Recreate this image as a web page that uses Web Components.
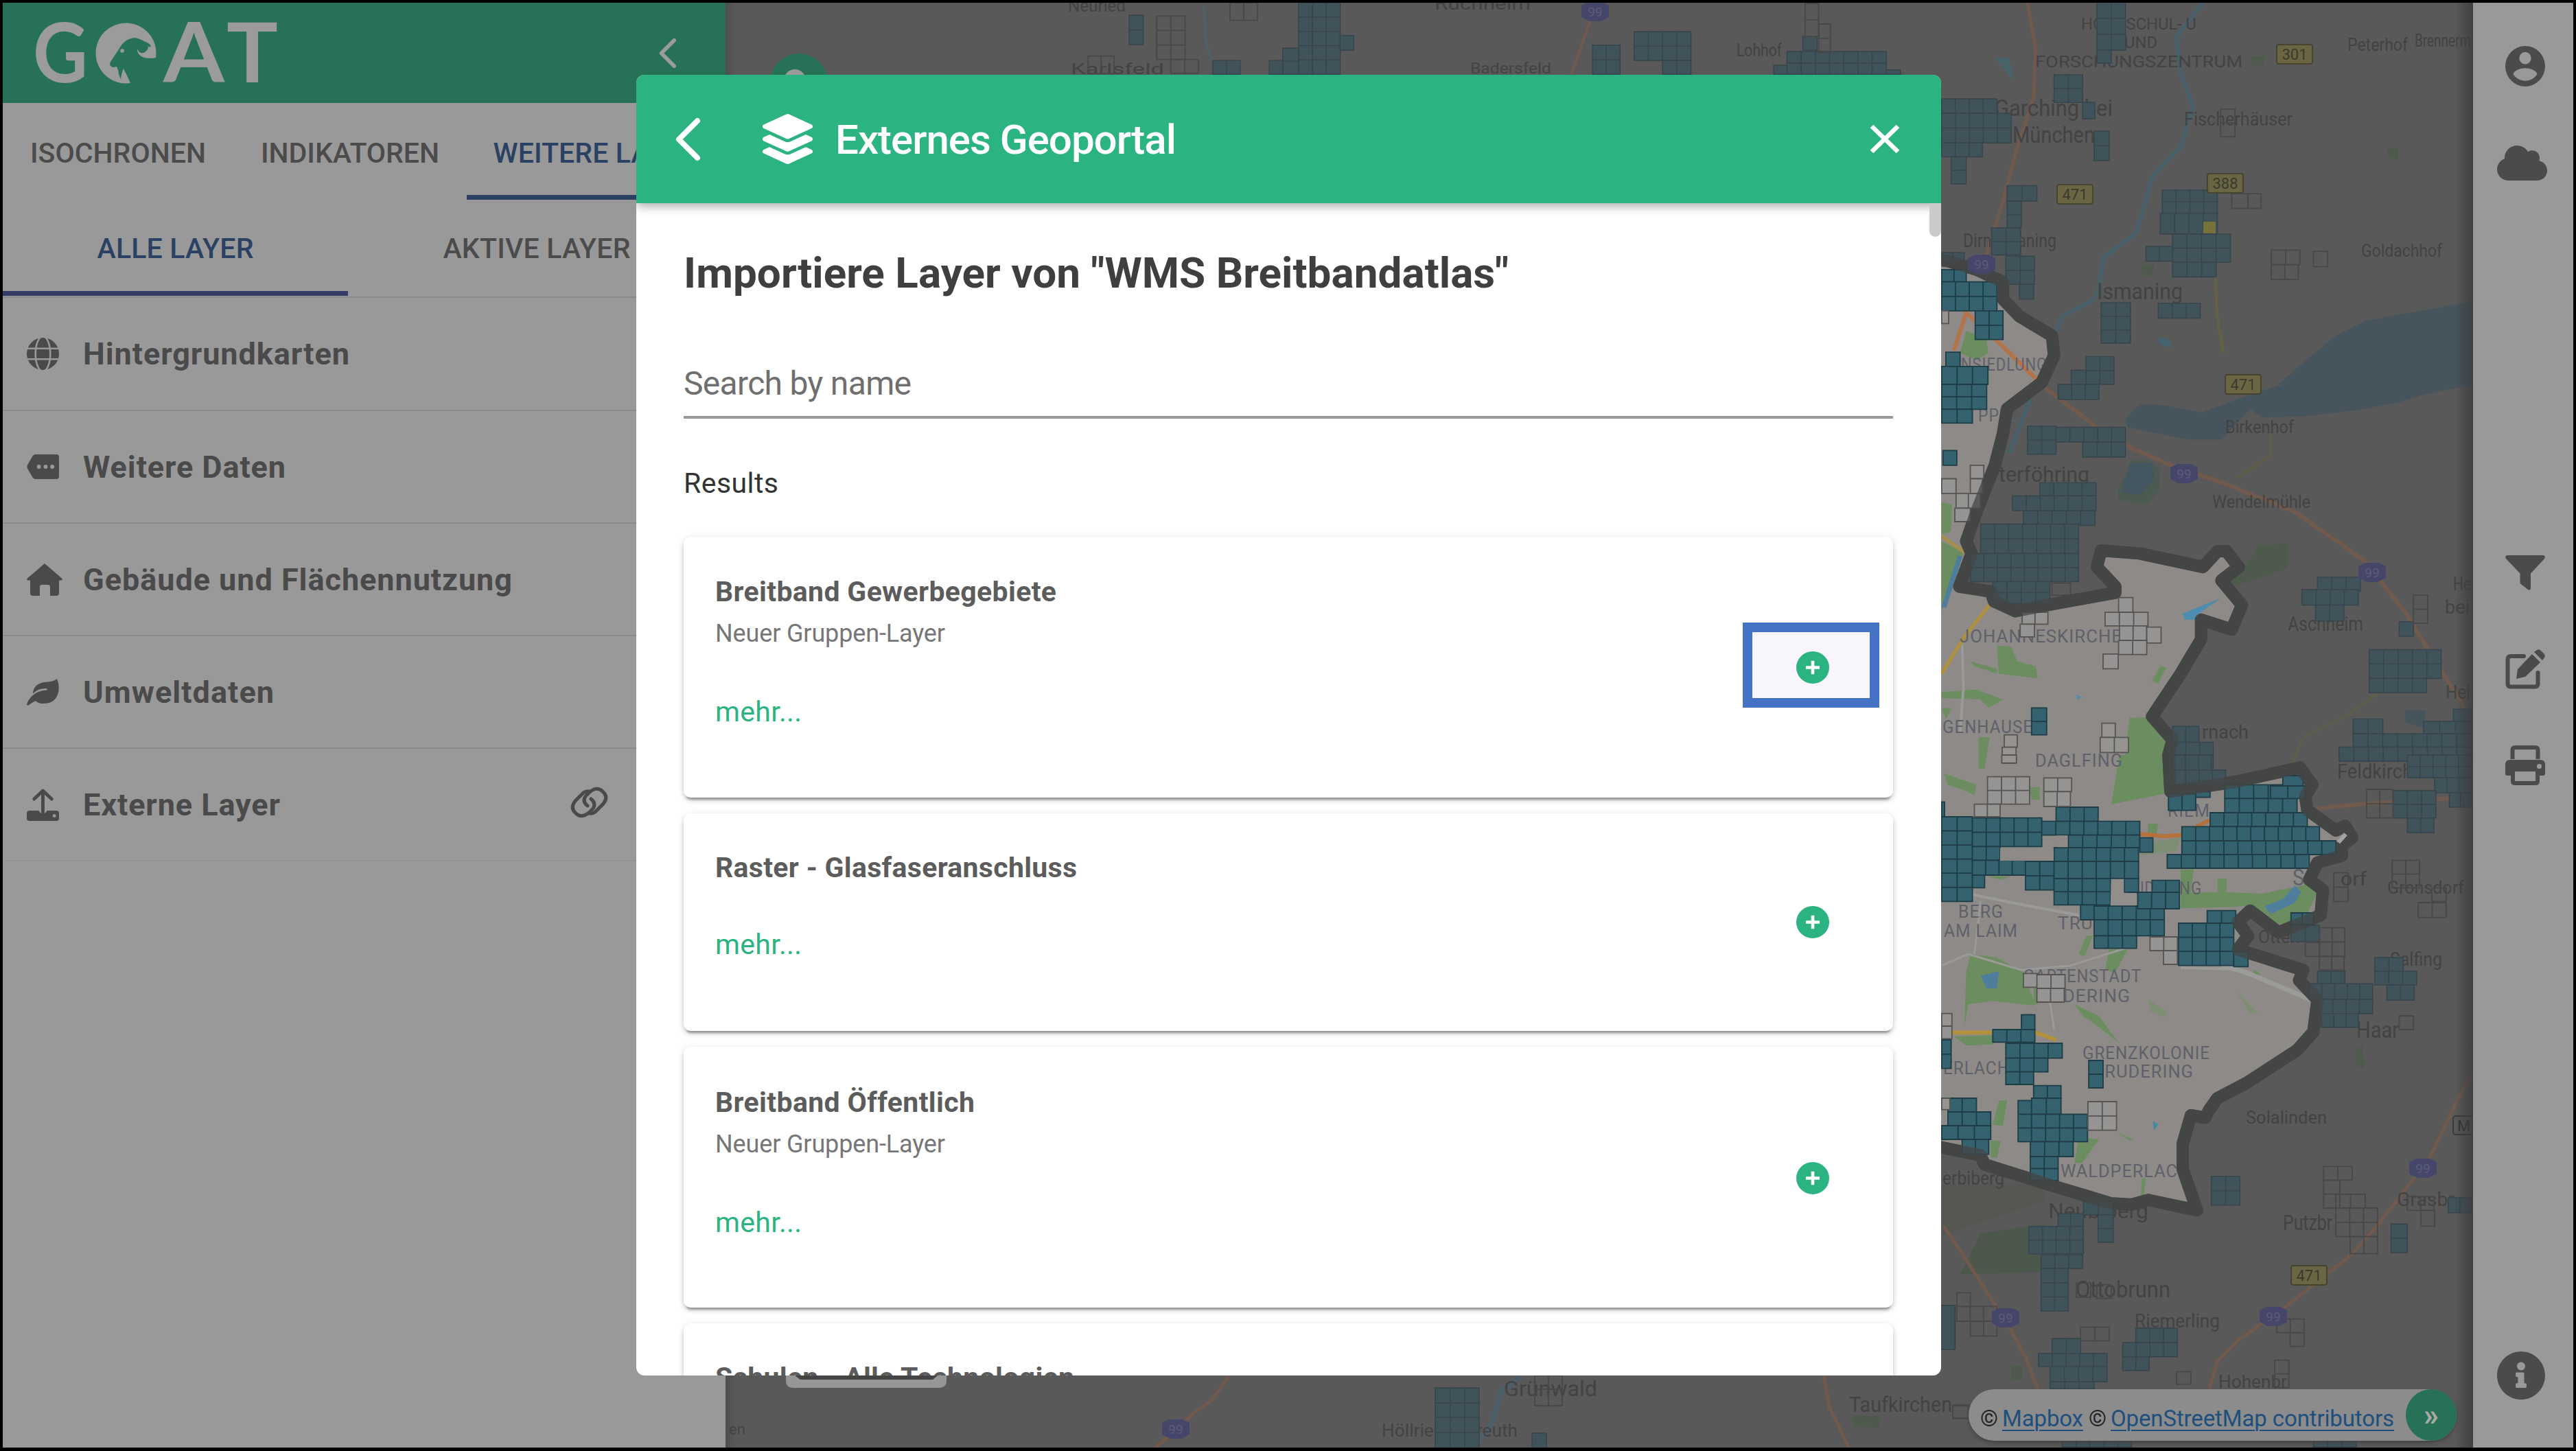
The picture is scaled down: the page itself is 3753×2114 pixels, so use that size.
<!DOCTYPE html>
<html lang="de">
<head>
<meta charset="utf-8">
<title>GOAT – Externes Geoportal</title>
<style>
html,body{margin:0;padding:0;background:#000}
body{width:3753px;height:2114px;overflow:hidden;font-family:Roboto,"Liberation Sans",sans-serif}
</style>
</head>
<body>
<goat-app></goat-app>
<script>
const define = (name, html, after) => {
  const tpl = document.createElement('template');
  tpl.innerHTML = html;
  customElements.define(name, class extends HTMLElement {
    constructor() {
      super();
      this.attachShadow({ mode: 'open' }).appendChild(tpl.content.cloneNode(true));
    }
    connectedCallback() { if (after) after.call(this, this.shadowRoot); }
  });
};

/* One line of text whose tracking is adjusted to a given width */
define('fit-text', `<style>:host{display:inline-block;white-space:pre}</style><span><slot></slot></span>`, function () {
  const w = +this.getAttribute('w'), n = this.textContent.length;
  const nat = this.getBoundingClientRect().width;
  if (w && nat) { this.style.letterSpacing = ((w - nat) / (n - 1)).toFixed(3) + 'px'; this.style.width = w + 'px'; }
});

const ICONS = {
  account: ['2 2 20 20', '<path d="M12,19.2C9.5,19.2 7.29,17.92 6,16C6.03,14 10,12.9 12,12.9C14,12.9 17.97,14 18,16C16.71,17.92 14.5,19.2 12,19.2M12,5A3,3 0 0,1 15,8A3,3 0 0,1 12,11A3,3 0 0,1 9,8A3,3 0 0,1 12,5M12,2A10,10 0 0,0 2,12A10,10 0 0,0 12,22A10,10 0 0,0 22,12C22,6.47 17.5,2 12,2Z"/>'],
  cloud: ['0 32 640 448', '<path d="M537.6 226.6c4.1-10.7 6.4-22.4 6.4-34.6 0-53-43-96-96-96-19.7 0-38.1 6-53.3 16.2C367 64.2 315.3 32 256 32c-88.4 0-160 71.6-160 160 0 2.7.1 5.4.2 8.1C40.2 219.8 0 273.2 0 336c0 79.5 64.5 144 144 144h368c70.7 0 128-57.3 128-128 0-61.9-44-113.6-102.4-125.4z"/>'],
  filter: ['0 0 58 52', '<path d="M2 0H56Q59 2 57 5L37 27V50Q36 52.500 33 51L23 43Q21.500 42 21.500 40V27L1 5Q-1 2 2 0Z"/>'],
  edit: ['0 0 58 58', '<path d="M27 10H8Q3.500 10 3.500 14.500V50Q3.500 54.500 8 54.500H43Q47.500 54.500 47.500 50V34" fill="none" stroke="currentColor" stroke-width="6" stroke-linecap="round"/><path d="M39 7L51 19L29 40L16 43L18 29ZM42 4L46 1Q49-1 52 2L56 6Q59 9 57 12L54 16Z"/>'],
  print: ['0 0 58 58', '<path d="M10.500 20V7Q10.500 3 14.500 3H43.500Q47.500 3 47.500 7V20" fill="none" stroke="currentColor" stroke-width="6"/><path fill-rule="evenodd" d="M7 21H51Q58 21 58 28V41Q58 44 55 44H50V52Q50 58 44 58H14Q8 58 8 52V44H3Q0 44 0 41V28Q0 21 7 21ZM14 38V52H44V38ZM49.500 27A3.500 3.500 0 1 0 49.500 34A3.500 3.500 0 1 0 49.500 27Z"/>'],
  info: ['8 8 496 496', '<path d="M256 8C119.043 8 8 119.083 8 256c0 136.997 111.043 248 248 248s248-111.003 248-248C504 119.083 392.957 8 256 8zm0 110c23.196 0 42 18.804 42 42s-18.804 42-42 42-42-18.804-42-42 18.804-42 42-42zm56 254c0 6.627-5.373 12-12 12h-88c-6.627 0-12-5.373-12-12v-24c0-6.627 5.373-12 12-12h12v-64h-12c-6.627 0-12-5.373-12-12v-24c0-6.627 5.373-12 12-12h64c6.627 0 12 5.373 12 12v100h12c6.627 0 12 5.373 12 12v24z"/>'],
  layers: ['0 0 512 512', '<path d="M12.41 148.02l232.94 105.67c6.8 3.09 14.49 3.09 21.29 0l232.94-105.67c16.55-7.51 16.55-32.52 0-40.03L266.65 2.31a25.607 25.607 0 0 0-21.29 0L12.41 107.98c-16.55 7.51-16.55 32.53 0 40.04zm487.18 88.28l-58.09-26.33-161.64 73.27c-7.56 3.43-15.59 5.17-23.86 5.17s-16.29-1.74-23.86-5.17L70.51 209.97l-58.1 26.33c-16.55 7.5-16.55 32.5 0 40l232.94 105.59c6.8 3.08 14.49 3.08 21.29 0L499.59 276.3c16.55-7.5 16.55-32.5 0-40zm0 127.8l-57.87-26.23-161.86 73.37c-7.56 3.43-15.59 5.17-23.86 5.17s-16.29-1.74-23.86-5.17L70.29 337.87 12.41 364.1c-16.55 7.5-16.55 32.5 0 40l232.94 105.59c6.8 3.08 14.49 3.08 21.29 0L499.59 404.1c16.55-7.5 16.55-32.5 0-40z"/>'],
  back: ['0 0 36 62', '<path d="M32 4L5 31L32 58" fill="none" stroke="currentColor" stroke-width="8" stroke-linecap="round" stroke-linejoin="round"/>'],
  close: ['0 0 44 44', '<path d="M3 3L41 41M41 3L3 41" fill="none" stroke="currentColor" stroke-width="6.500"/>'],
  plus: ['0 0 48 48', '<circle cx="24" cy="24" r="24"/><path d="M24 14V34M14 24H34" stroke="#fff" stroke-width="4.600"/>'],
  globe: ['0 0 48 48', '<circle cx="24" cy="24" r="24"/><g fill="none" stroke="#999" stroke-width="2.600"><ellipse cx="24" cy="24" rx="11" ry="26"/><path d="M0 16H48M0 32H48"/></g>'],
  tag: ['0 0 48 36', '<path d="M13 0H44Q48 0 48 4V32Q48 36 44 36H13Q10.500 36 9 34L1 20.500Q0 18 1 15.500L9 2Q10.500 0 13 0Z"/><g fill="#999"><circle cx="18" cy="18" r="3"/><circle cx="28" cy="18" r="3"/><circle cx="38" cy="18" r="3"/></g>'],
  home: ['0 0 52 47', '<path d="M26 0L51 21.500Q53 24 50 24.500H47V43Q47 47 43 47H34V34Q34 31 31 31H22Q19 31 19 34V47H9Q5 47 5 43V24.500H2Q-1 24 1 21.500Z"/>'],
  leaf: ['0 0 48 40', '<path d="M45 0Q49 10 47 20Q43 37 25 37Q18 37 13 33Q6 36 3.500 39Q1 41 0 38Q4 26 16 20Q23 17 30 17Q31 15 29 14.500Q18 14 9 22Q10 8 25 5Q39 5 45 0Z"/>'],
  upload: ['0 0 48 47', '<path d="M24 4V34M11 15L24 3L37 15" fill="none" stroke="currentColor" stroke-width="5" stroke-linecap="round" stroke-linejoin="round"/><path fill-rule="evenodd" d="M4 32H18Q19 36 24 36T30 32H44Q48 32 48 36V43Q48 47 44 47H4Q0 47 0 43V36Q0 32 4 32ZM41 37A2.500 2.500 0 1 0 41 42A2.500 2.500 0 1 0 41 37Z"/>'],
  link: ['0 0 55 44', '<g fill="none" stroke="currentColor" stroke-width="5" stroke-linecap="round"><path d="M25 27Q17 21 22 13L28 7Q39-2 47 6Q56 14 48 24L36 36Q32 39 28 38"/><path d="M30 17Q38 23 33 31L27 37Q16 46 8 38Q-1 30 7 20L19 8Q23 5 27 6"/></g>']
};
define('ui-icon', `<style>:host{display:inline-block;flex:none}svg{display:block;width:100%;height:100%;fill:currentColor;overflow:visible}</style><svg preserveAspectRatio="none"></svg>`, function (r) {
  const [vb, body] = ICONS[this.getAttribute('name')];
  const s = r.querySelector('svg');
  s.setAttribute('viewBox', vb); s.innerHTML = body;
  this.style.width = this.getAttribute('w') + 'px';
  this.style.height = this.getAttribute('h') + 'px';
});

/* Wordmark: letters with a goat's head in the round letter */
define('goat-logo', `<style>:host{display:block;width:352px;height:90px}svg{display:block;overflow:visible}text{font-family:Lato,sans-serif;font-weight:700;font-size:121px;fill:#9b9b9b}</style>
<svg width="352" height="90" viewBox="50 32 352 90">
<text x="47" y="120" textLength="80" lengthAdjust="spacingAndGlyphs">G</text>
<path d="M189 121A44 44 0 1 1 226 84Q220 86 209 84Q198 80 199 71Q203 80 210 76Q217 71 214 65Q207 57 196 55Q180 56 172 72L160 90Q157 95 163 98Q166 98 169 97Q172 103 172 108Q173 112 175 115Q176 106 179 100Q184 110 189 121Z" fill="#9b9b9b"/>
<path d="M194 62Q210 58 218 68" fill="none" stroke="#277156" stroke-width="3"/>
<circle cx="177" cy="74" r="2.800" fill="#9b9b9b"/>
<text x="237" y="120" textLength="89" lengthAdjust="spacingAndGlyphs">A</text>
<text x="329" y="120" textLength="75" lengthAdjust="spacingAndGlyphs">T</text>
</svg>`);

define('side-tab', `<style>
:host{display:flex;align-items:center;justify-content:center;box-sizing:border-box;flex:none;color:#4b4b4b;font-size:41px;font-weight:500;line-height:50px}
:host([active]){color:#2b4164}
</style><slot></slot>`);

define('side-row', `<style>
:host{display:flex;align-items:center;height:164px;box-sizing:border-box;border-bottom:2px solid #8a8a8a;padding-left:35px;color:#4a4a4a;font-size:45px;font-weight:700}
:host([last]){border-bottom-color:#939393}
.i{width:82px;display:flex}
.e{margin-left:auto;padding-right:171px;padding-top:5px}
</style><div class="i"><slot name="icon"></slot></div><slot></slot><div class="e"><slot name="end"></slot></div>`);

define('goat-sidebar', `<style>
:host{display:block;width:1053px;height:2105px;background:#999;overflow:hidden}
header{display:flex;align-items:center;justify-content:space-between;height:146px;background:#277156;color:#9b9b9b;padding:0 72px 0 47px;box-sizing:border-box}
.tabs{display:flex}
.a{height:141px}.a side-tab{height:141px;padding-top:4px}
.b{height:143px;border-bottom:2px solid #8a8a8a;box-sizing:border-box}
.b side-tab{height:140px;padding-top:2px}
</style>
<header><goat-logo></goat-logo><ui-icon name="back" w="25" h="43"></ui-icon></header>
<div class="tabs a">
<side-tab style="width:336px"><fit-text w="256">ISOCHRONEN</fit-text></side-tab>
<side-tab style="width:340px"><fit-text w="260">INDIKATOREN</fit-text></side-tab>
<side-tab active style="width:377px;box-shadow:inset 0 -7px #2b4164"><fit-text w="300">WEITERE LAYER</fit-text></side-tab>
</div>
<div class="tabs b">
<side-tab active style="width:503px;box-shadow:inset 0 -7px #333c66"><fit-text w="228">ALLE LAYER</fit-text></side-tab>
<side-tab style="width:550px"><fit-text w="273">AKTIVE LAYER</fit-text></side-tab>
</div>
<side-row style="height:165px"><ui-icon slot="icon" name="globe" w="47" h="47"></ui-icon><fit-text w="388">Hintergrundkarten</fit-text></side-row>
<side-row><ui-icon slot="icon" name="tag" w="47" h="36"></ui-icon><fit-text w="295">Weitere Daten</fit-text></side-row>
<side-row><ui-icon slot="icon" name="home" w="52" h="47"></ui-icon><fit-text w="625">Gebäude und Flächennutzung</fit-text></side-row>
<side-row><ui-icon slot="icon" name="leaf" w="47" h="39"></ui-icon><fit-text w="278">Umweltdaten</fit-text></side-row>
<side-row last><ui-icon slot="icon" name="upload" w="47" h="47"></ui-icon><fit-text w="287">Externe Layer</fit-text><ui-icon slot="end" name="link" w="55" h="44"></ui-icon></side-row>`);

/* Map of the city's east: every tile lists its features in its own grid units */
const TILES = { a: [0, 2.8], b: [560, 2.8], c: [1100, 3], d: [1600, 3], t: [0, 3] };
const px = (t, u, v) => [+(t === 't' ? 1040 + u / .8711 : 2820 + u / 1.6806).toFixed(1), +(TILES[t][0] + v / TILES[t][1]).toFixed(1)];
const line = segs => segs.map(([t, s]) => s.trim().split(/\s+/).map(p => px(t, ...p.split(',').map(Number)).join(',')).join(' ')).join(' ');
/* Each block is its own path, so a later block hides the grid of the one below it */
const cells = (t, s) => s.trim().split(/\s+/).map(q => {
  const [u1, v1, u2, v2] = q.split(',').map(Number);
  const [x1, y1] = px(t, u1, v1), [x2, y2] = px(t, u2, v2);
  const nx = Math.max(1, Math.round((x2 - x1) / 20.5)), ny = Math.max(1, Math.round((y2 - y1) / 20.8));
  let d = `M${x1} ${y1}H${x2}V${y2}H${x1}Z`;
  for (let i = 1; i < nx; i++) { const x = (x1 + (x2 - x1) * i / nx).toFixed(1); d += `M${x} ${y1}V${y2}`; }
  for (let i = 1; i < ny; i++) { const y = (y1 + (y2 - y1) * i / ny).toFixed(1); d += `M${x1} ${y}H${x2}`; }
  return `<path d="${d}"/>`;
}).join('');
const label = (x, y, w, size, text, cls = 'o') => `<text class="${cls}" x="${x}" y="${y}" font-size="${size}" textLength="${w}" lengthAdjust="spacingAndGlyphs">${text}</text>`;
const badge = (x, y, text) => `<rect x="${x - 26}" y="${y - 14}" width="52" height="28" rx="3" fill="#6a6644" stroke="#46442f" stroke-width="2"/><text x="${x}" y="${y + 8}" font-size="22" text-anchor="middle" fill="#3a3a2e">${text}</text>`;
const shield = (x, y) => `<path d="M${x - 20} ${y - 9}L${x - 10} ${y - 14}H${x + 10}L${x + 20} ${y - 9}V${y + 8}L${x + 8} ${y + 14}H${x - 8}L${x - 20} ${y + 8}Z" fill="#45466a"/><text x="${x}" y="${y + 7}" font-size="19" text-anchor="middle" fill="#5b5c79">99</text>`;

const border = line([
  ['a', '-60,1045 30,1065 100,1100 165,1150 165,1220 205,1290 285,1370 290,1450 260,1560'],
  ['b', '175,100 165,200 145,330 100,520 75,640 88,690 58,825 135,845 143,885 195,925 290,895 440,850 440,825 395,745 405,678 500,690 655,745 690,680 712,680 742,745 700,800 750,900 725,1000 650,960 650,1040 600,1180 530,1355 580,1450'],
  ['c', '570,0 575,160 740,115 892,55 922,130 905,180 910,240 980,330 1003,310 1020,360 993,400 995,440 935,470 915,545 948,590 943,700 840,775 770,680 740,730 765,790 740,850 900,940 890,985 935,1070 925,1210 885,1290 760,1435 690,1500'],
  ['d', '670,50 660,85 625,75 605,200 605,310 640,490 520,445 480,465 430,460 300,390 120,290 110,250 15,215 -60,195']]);
const P = (t, s, fill) => `<polygon points="${line([[t, s]])}" fill="${fill}"/>`;
const L = (segs, c, w) => `<polyline points="${line(segs)}" fill="none" stroke="${c}" stroke-width="${w}" stroke-linejoin="round"/>`;
const G = '#6c8d60', GO = '#4e5a4c', W = '#4f7e9d', OR = '#705a4d';

const mapSvg = `
<rect x="1057" y="4" width="2546" height="2106" fill="#595959"/>
${P('a', '840,1568 900,1480 980,1370 1050,1310 1130,1285 1315,1230 1315,1568', '#46545d')}
${P('b', '500,80 560,85 650,115 740,60 850,0 1315,0 1200,40 1130,75 1030,105 900,130 800,135 770,100 700,225 620,225 470,175 465,140', '#46545d')}
${P('b', '480,310 520,310 550,350 545,440 515,490 450,475 445,440', '#4b5b51')}${P('b', '475,320 530,320 535,390 500,450 455,440', '#44565f')}
${P('b', '790,660 860,645 860,750 735,825 720,800 760,740', GO)}
${P('d', '15,380 270,380 265,450 15,600', '#565750')}${P('d', '110,590 270,550 265,760 60,770', '#4d584c')}
${P('a', '145,235 180,235 192,330', '#466469')}
${P('a', '770,230 810,230 800,270 775,265', GO)}${P('a', '1105,605 1135,605 1130,655 1108,640', GO)}${P('a', '505,1080 535,1080 530,1130 505,1120', GO)}${P('a', '550,1370 580,1400 570,1420 545,1400', '#46646d')}
${P('b', '1150,1330 1200,1330 1195,1400 1150,1380', '#46555c')}${P('c', '1030,1280 1045,1270 1050,1370 1030,1360', GO)}${P('d', '185,1170 212,1170 212,1230 185,1230', GO)}
${L([['a', '655,10 590,150 600,300 630,430 600,600 530,720 510,850 490,950 410,1050 400,1180 385,1225 310,1290 290,1370'], ['b', '200,200 180,280']], '#48606a', 6)}
${L([['a', '225,10 245,200 240,400 200,600 160,850 120,1060']], OR, 5)}
${L([['b', '265,10 390,170 480,260 570,325 700,400 880,520 1050,720 1150,930 1250,1200 1300,1330']], OR, 6)}
${L([['c', '1318,1390 1280,1500'], ['d', '1210,260 1080,560 1020,680 880,880 740,1060 690,1150 670,1270']], OR, 5)}
${L([['d', '20,560 80,720 130,860 180,1000 220,1130 250,1272']], OR, 5)}
${L([['a', '685,1130 690,1300 705,1440']], '#646046', 4)}${L([['b', '820,200 820,290 740,380']], '#5f5c48', 4)}
${L([['b', '1090,1250 1000,1360 900,1440 870,1560']], '#5f5e4a', 4)}
${L([['c', '925,235 1040,215 1150,200 1260,190']], OR, 6)}
${L([['t', '1112,90 1100,210 1088,325']], OR, 4)}${L([['t', '622,20 625,200 640,320']], '#526068', 4)}
<polyline points="1790,2006 1765,2040 1738,2060 1705,2090 1680,2112" fill="none" stroke="${OR}" stroke-width="5"/>
<polyline points="2657,2004 2665,2050 2680,2080 2695,2112" fill="none" stroke="${OR}" stroke-width="5"/>
<polyline points="2215,2004 2185,2030 2175,2070 2155,2100" fill="none" stroke="#4c5e67" stroke-width="8"/>
<polygon points="2700,2062 2740,2064 2736,2080 2700,2078" fill="${GO}"/>
<polygon points="${border}" fill="#8e8a87"/>
${P('a', '75,1350 125,1380 128,1440 100,1470 60,1440', G)}
${P('b', '15,480 40,490 38,600 15,610', G)}${P('b', '15,640 68,685 40,840 15,920', G)}${L([['b', '60,700 20,910']], W, 7)}
${P('b', '150,1065 185,1070 200,1130 245,1150 250,1200 155,1180', G)}${P('b', '85,1130 150,1160 150,1180 95,1150', G)}
${P('b', '15,1255 100,1245 165,1285 130,1320 110,1285 15,1280', G)}${P('b', '550,1150 565,1155 545,1220 530,1210', G)}
${P('b', '475,1360 525,1358 575,1450 575,1568 460,1568', G)}${P('c', '450,0 560,0 560,170 430,215', G)}
${P('b', '105,1440 132,1440 120,1568 105,1568', G)}${P('b', '15,1320 40,1320 25,1365', G)}
${P('c', '20,80 100,130 95,175 65,150 30,130', G)}${P('c', '230,140 255,140 255,195 235,195', G)}
${P('c', '520,300 545,300 540,350 520,340', G)}${P('c', '535,380 600,360 590,420 500,440', '#7e8e72')}
${P('c', '600,500 632,500 625,600 690,600 690,540 712,540 712,600 800,605 900,570 930,520 935,600 900,730 840,740 790,680 770,660 700,665 600,670', G)}
${P('c', '880,570 895,600 880,645 820,695 805,660 850,630', W)}
${P('b', '605,935 700,870 640,940 635,960 610,960', '#4d8db0')}
${P('c', '85,870 150,885 215,950 240,1070 240,1095 140,1075 80,1090 70,1190 75,950', G)}${P('c', '110,965 155,945 150,1020 125,1020', W)}
${P('c', '425,850 470,850 440,950 415,940', G)}${P('c', '125,530 185,530 160,545', G)}
${P('c', '340,1090 400,1140 420,1190 450,1260 400,1190 360,1140', G)}${P('c', '520,1070 570,1120 560,1145 525,1120', '#7e8e72')}
${P('c', '735,1030 790,1130 770,1130', '#7e8e72')}${P('c', '780,940 795,955 785,980 770,970', G)}${P('c', '45,1230 140,1225 140,1265 75,1270', G)}
${P('c', '370,790 385,790 365,880 350,870', G)}${P('c', '240,990 240,1090 250,1090 250,990', G)}
${P('d', '155,10 175,10 165,120 140,115', G)}${P('d', '135,185 160,185 150,260 135,260', G)}${P('d', '350,170 400,180 360,280 340,285', G)}${P('d', '445,150 485,180 475,185', G)}${P('d', '505,350 515,350 510,430 502,430', G)}
${P('d', '532,100 545,115 535,140', '#3f8aa8')}${P('b', '345,1265 358,1275 347,1288', '#4d8db0')}
${L([['c', '15,600 90,610 200,650 350,700']], '#9a9a99', 4)}${L([['c', '15,920 80,870 210,940 330,920 490,830']], '#9a9a99', 3)}
${L([['c', '700,920 760,950 920,1070']], '#9b9b9a', 7)}${L([['c', '600,930 720,935']], '#9b9b9a', 4)}${L([['c', '110,640 95,870']], '#9a9a99', 3)}
${L([['b', '65,1060 68,1240 60,1420']], '#9a9a99', 4)}${L([['c', '280,1080 290,1200']], '#9a9a99', 3)}
${L([['a', '45,1430 75,1275 150,1390 260,1568']], '#b5734a', 6)}
${L([['b', '15,1180 70,1030 132,900']], '#b08f3e', 5)}${L([['b', '15,620 75,690']], '#a38f4a', 5)}
${L([['c', '500,345 560,355 600,350 670,285']], '#b5713c', 6)}
${L([['c', '38,1213 145,1213']], '#b3903c', 6)}${L([['c', '240,1210 295,1245']], '#b3903c', 6)}
${label(3032, 43, 168, 24, 'HOCHSCHUL- U')}${label(3095, 70, 48, 24, 'UND')}${label(2965, 98, 302, 24, 'FORSCHUNGSZENTRUM')}
${label(2906, 169, 172, 34, 'Garching bei')}${label(2932, 208, 120, 34, 'München')}
${label(3182, 183, 158, 27, 'Fischerhäuser')}${label(3420, 74, 88, 25, 'Peterhof')}${label(3518, 68, 82, 25, 'Brennerm')}
${label(2860, 360, 136, 27, 'Dirnismaning')}${label(3055, 436, 125, 34, 'Ismaning')}${label(3440, 374, 118, 25, 'Goldachhof')}
${label(3242, 631, 100, 25, 'Birkenhof')}${label(2912, 702, 132, 32, 'terföhring')}${label(3223, 740, 143, 26, 'Wendelmühle')}
${label(3333, 919, 110, 29, 'Aschheim')}${label(3208, 1076, 68, 27, 'rnach')}${label(3574, 860, 26, 28, 'He')}${label(3562, 894, 36, 28, 'bei')}${label(3563, 1018, 36, 28, 'Hei')}
${label(3405, 1134, 110, 29, 'Feldkirch')}${label(3410, 1290, 38, 28, 'orf')}${label(3478, 1302, 112, 26, 'Gronsdorf')}${label(3290, 1374, 60, 26, 'Otten')}
${label(3482, 1407, 76, 28, 'Salfing')}${label(3433, 1512, 62, 34, 'Haar')}${label(3272, 1637, 118, 25, 'Solalinden')}
${label(2830, 1726, 90, 28, 'erbiberg')}${label(2984, 1775, 146, 32, 'Neubiberg')}${label(3326, 1792, 72, 32, 'Putzbr')}${label(3024, 1890, 138, 34, 'Ottobrunn')}${label(3492, 1757, 84, 28, 'Grasbr')}
${label(3110, 1934, 124, 27, 'Riemerling')}${label(3232, 2022, 100, 25, 'Hohenbr')}${label(2694, 2057, 150, 31, 'Taufkirchen')}
${label(2191, 2034, 136, 32, 'Grünwald')}${label(2013, 2093, 198, 26, 'Höllriegelskreuth')}${label(1556, 17, 84, 26, 'Neuried')}${label(2090, 14, 140, 26, 'Ruchheim')}${label(1560, 108, 136, 22, 'Karlsfeld')}${label(2142, 107, 118, 22, 'Badersfeld')}${label(2530, 82, 66, 26, 'Lohhof')}${label(1062, 2090, 24, 22, 'en')}
${label(2857, 540, 126, 25, 'NSIEDLUNG', 'n')}${label(2882, 614, 58, 25, 'PPEL', 'n')}${label(2855, 936, 237, 25, 'JOHANNESKIRCHE', 'n')}${label(2830, 1068, 132, 25, 'GENHAUSE', 'n')}${label(2965, 1117, 128, 25, 'DAGLFING', 'n')}
${label(3158, 1190, 62, 25, 'RIEM', 'n')}${label(3080, 1303, 128, 25, 'TRUDERING', 'n')}${label(2853, 1337, 66, 25, 'BERG', 'n')}${label(2832, 1365, 108, 25, 'AM LAIM', 'n')}${label(2998, 1354, 70, 25, 'TRUD', 'n')}
${label(2948, 1431, 172, 25, 'GARTENSTADT', 'n')}${label(2970, 1460, 134, 25, 'RUDERING', 'n')}${label(3034, 1543, 186, 25, 'GRENZKOLONIE', 'n')}${label(3050, 1570, 146, 25, 'TRUDERING', 'n')}${label(2831, 1565, 97, 25, 'ERLACH', 'n')}${label(3002, 1715, 190, 25, 'WALDPERLACH', 'n')}${label(3340, 1290, 18, 34, 'S', 'n')}
<polyline points="${border}" fill="none" stroke="#444545" stroke-width="18" stroke-linejoin="round"/>
<g fill="#40525a" stroke="#37454c" stroke-width="1.500">${
cells('a', '395,10,465,205 395,205,430,258 290,305,360,418 360,418,390,485 15,403,150,462 15,462,185,583 15,583,115,640 38,640,75,750 388,535,425,655 175,757,248,820 175,820,210,930 137,930,208,1040 172,1045,242,1160 205,1160,240,1220 555,775,690,870 550,870,690,955 580,955,722,1070 515,1005,580,1065 580,1070,687,1130 405,1235,477,1400 545,1238,648,1298 368,1455,437,1568 332,1510,368,1568 15,1030,70,1065')
+ cells('b', '300,0,400,62 225,170,295,285 295,175,465,235 360,235,465,297 255,402,393,455 188,455,393,515 215,515,390,575 110,570,350,690 85,690,350,805 140,805,280,895 935,787,1040,845 897,837,1035,900 930,900,1000,965 1135,968,1170,1028 1062,1082,1238,1200 1062,1200,1202,1258 1195,1375,1312,1425 1022,1365,1095,1425 1022,1425,1312,1480 988,1480,1312,1538 1268,1325,1312,1375 580,1395,645,1460 580,1460,680,1568')
+ cells('c', '580,0,675,65 580,65,710,130 1155,0,1312,100 1222,100,1312,165 1258,165,1312,228 1120,155,1225,275 1155,275,1220,340 870,745,940,815 1075,885,1145,945 1075,945,1178,1005 1105,1005,1172,1072 935,945,1002,1000 915,1000,1070,1068 940,1068,1070,1130 945,1130,1035,1190')
+ cells('d', '675,342,745,467 362,450,435,510 300,505,362,560 228,560,362,680 398,510,435,630 258,685,360,745 258,745,325,930 1115,550,1155,675 1255,435,1312,500 15,905,48,1095 285,1050,355,1115 252,1115,420,1172 280,1172,420,1240 280,1240,388,1270 490,1005,592,1068 458,1068,592,1130 458,1130,523,1190 310,1495,480,1525 925,1495,1030,1525')
+ cells('t', '527,66,545,195 633,265,668,325 742,12,795,325 722,210,742,325 705,265,722,325 795,155,812,220 1115,197,1150,325 1168,138,1240,265 1204,265,1240,325 1382,160,1400,220 1362,225,1488,325 1345,285,1362,325 1488,305,1506,325')
}<path d="M2091 2022H2155V2112H2091ZM2113 2022V2112M2134 2022V2112M2091 2044H2155M2091 2065H2155M2091 2087H2155M2232 2088H2253V2112H2232ZM2828 1902H2848V1966H2828Z"/></g>
<g fill="none" stroke="#484848" stroke-width="1.800">${
cells('a', '698,445,733,558 725,790,765,850 765,790,797,850 822,1020,892,1080 822,1080,888,1140 925,1025,960,1088')
+ cells('b', '1170,860,1205,975 285,810,330,860')
+ cells('c', '1055,150,1120,275 1118,460,1185,580 1215,580,1250,640 1182,645,1250,710 975,515,1010,640 940,755,1002,880 905,820,940,880 940,880,1000,940 1135,1140,1170,1200')
+ cells('d', '950,298,1020,358 950,358,990,480 980,420,1052,480 980,480,1082,605 1015,605,1082,680 1155,430,1220,490 1188,490,1222,560 52,850,85,910 52,910,150,975 85,975,150,1040 355,1000,425,1060 590,1195,625,1250 835,965,902,1025 868,1025,902,1085 830,1145,865,1265 345,808,380,870 395,815,430,875 42,1340,80,1400')
+ cells('t', '562,70,598,260 580,260,615,320 475,245,508,322 655,12,690,88 1385,15,1402,160 1402,105,1417,230')
}<path d="M2236 2004H2276V2048H2236ZM2256 2004V2048M2236 2024H2276M2845 2048H2870V2066H2845Z"/></g>
<g fill="#34636f" stroke="#1d3c46" stroke-width="1.800">${
cells('a', '15,1100,75,1150 15,1150,150,1268 97,1268,165,1385 25,1437,60,1495 15,1495,128,1568')
+ cells('b', '15,0,125,102 15,102,90,158 18,270,52,330 235,1320,272,1430')
+ cells('c', '15,205,22,270 15,270,90,640 90,275,260,400 90,400,158,460 90,460,220,525 90,525,120,580 295,228,398,290 260,290,500,350 325,350,500,405 220,465,290,590 290,405,497,465 290,465,497,540 290,540,428,655 500,362,532,425 355,655,390,720 388,660,560,720 388,720,560,790 388,790,492,845 462,540,497,600 530,548,597,600 495,600,597,672 570,170,637,242 637,160,672,185 708,130,885,190 708,190,885,252 850,90,900,135 820,135,905,190 672,252,910,313 603,313,940,375 603,375,980,435 567,435,915,495 665,680,735,735 595,735,730,920 730,860,765,925 870,690,925,740 210,1135,243,1200 140,1200,243,1255 172,1260,310,1325 172,1325,275,1385 172,1385,240,1440 375,1335,410,1455 15,1245,38,1370 240,1445,307,1500')
+ cells('d', '30,0,100,60 30,60,135,120 15,120,135,180 65,180,130,245 202,10,235,190 235,0,307,70 235,70,372,190 232,190,337,255 232,255,300,360')
}</g>
<g fill="#969492" stroke="#555453" stroke-width="1.800">${
cells('a', '15,1268,32,1320')
+ cells('b', '85,330,118,385 15,385,50,445 50,445,110,505 85,385,115,445 47,505,85,560 212,930,275,978 207,978,242,1030 448,870,483,930 415,930,520,985 450,985,517,1045 517,990,552,1055 448,1045,517,1102 410,1100,447,1160 407,1382,440,1440 403,1440,472,1502 168,1430,200,1480 163,1480,197,1545')
+ cells('c', '127,95,230,215 265,100,333,160 265,160,330,225 95,215,158,270 215,955,250,1015 248,960,317,1020 248,1020,315,1080 525,795,592,855 558,855,592,915 15,1130,40,1240 162,0,198,35')
+ cells('d', '373,15,443,140 15,0,35,50')
}</g>
${P('c', '297,352 323,352 323,403 297,403', '#8e8a87')}${P('c', '158,407 289,407 289,462 158,462', '#8e8a87')}${P('c', '430,542 461,542 461,602 492,604 490,658 428,658', '#918e8b')}
<polyline points="${border}" fill="none" stroke="#444545" stroke-width="18" stroke-linejoin="round" stroke-opacity=".75"/>
${P('c', '1000,340 1008,352 990,388 983,378', '#a5a3a1')}
${badge(3343, 79, '301')}${badge(3023, 283, '471')}${badge(3242, 267, '388')}${badge(3268, 560, '471')}${badge(3364, 1858, '471')}
<rect x="3210" y="323" width="18" height="17" fill="#77713c"/>
${shield(3182, 690)}${shield(3456, 834)}${shield(3530, 1702)}${shield(3312, 1918)}${shield(2922, 1920)}${shield(1713, 2082)}${shield(2324, 17)}${shield(2887, 385)}
<rect x="3574" y="1626" width="40" height="27" rx="4" fill="none" stroke="#3a3a3a" stroke-width="2"/><text x="3580" y="1648" font-size="22" fill="#333">M</text>
<circle cx="1164" cy="120" r="42" fill="#277156"/><circle cx="1158" cy="117" r="16" fill="#9b9b9b"/>
<path d="M1145 1990H1379V2011Q1379 2022 1368 2022H1156Q1145 2022 1145 2011Z" fill="#969696"/><path d="M1158 1990H1366V2004L1359 2010H1166L1158 2004Z" fill="#444"/>
<rect x="3576" y="4" width="27" height="2106" fill="url(#edge)"/><rect x="1057" y="4" width="16" height="2106" fill="url(#edgeL)"/>`;

define('city-map', `<style>
:host{display:block;width:2546px;height:2105px;overflow:hidden;font-family:Roboto,sans-serif}
svg{display:block}
.o{fill:#434343}
.n{fill:#5f616a;letter-spacing:1px}
</style><svg width="2546" height="2105" viewBox="1057 4 2546 2105">
<defs><linearGradient id="edge"><stop offset="0" stop-color="#3a3a3a" stop-opacity="0"/><stop offset="1" stop-color="#3a3a3a" stop-opacity=".8"/></linearGradient>
<linearGradient id="edgeL"><stop offset="0" stop-color="#444" stop-opacity=".5"/><stop offset="1" stop-color="#444" stop-opacity="0"/></linearGradient></defs>${mapSvg}</svg>`);

define('map-attribution', `<style>
:host{display:flex;align-items:center;width:711px;height:75px;box-sizing:border-box;border-radius:38px;background:#8c8c8c;padding-left:17px;font-size:33px;color:#222;box-shadow:0 3px 5px #444}
a{color:#1f4f7d;text-decoration:none}
a fit-text{text-decoration:underline;text-underline-offset:5px;text-decoration-thickness:2px}
.t{padding-top:9px;display:flex;gap:8px}
b{margin-left:auto;width:74px;height:75px;border-radius:50%;background:#277156;color:#aaa;display:flex;align-items:center;justify-content:center;font-size:44px;font-weight:700;line-height:60px}
</style><div class="t"><fit-text w="24">©</fit-text><a href="#"><fit-text w="118">Mapbox</fit-text></a><fit-text w="24">©</fit-text><a href="#"><fit-text w="413">OpenStreetMap contributors</fit-text></a></div><b>»</b>`);

define('tool-rail', `<style>
:host{display:flex;flex-direction:column;align-items:flex-start;width:146px;height:2105px;background:#999;color:#4b4b4b;box-sizing:border-box;padding-top:63px}
ui-icon{margin-left:47px}
.w{margin-left:35px}
</style>
<ui-icon name="account" w="58" h="59"></ui-icon>
<ui-icon class="w" name="cloud" w="73" h="51" style="margin-top:86px"></ui-icon>
<ui-icon name="filter" w="58" h="51" style="margin-top:546px"></ui-icon>
<ui-icon name="edit" w="58" h="58" style="margin-top:86px"></ui-icon>
<ui-icon name="print" w="58" h="58" style="margin-top:82px"></ui-icon>
<ui-icon class="w" name="info" w="70" h="70" style="margin-top:825px"></ui-icon>`);

define('result-card', `<style>
:host{display:flex;box-sizing:border-box;height:317px;width:1762px;background:#fff;border-radius:10px;box-shadow:0 7px 3px -4px rgba(0,0,0,.28),0 4px 6px rgba(0,0,0,.16),0 2px 12px rgba(0,0,0,.10);padding:54px 0 0 46px;margin-bottom:23px;flex:none}
:host([group]){height:380px;padding-top:55px}
:host([group]:not([marked])){padding-top:56px}
.l{flex:1;line-height:50px}
.title{display:block;font-size:41px;font-weight:700;color:#5c5c5c;height:50px}
.sub{display:block;font-size:36px;color:#777;height:50px;margin-top:11px}
.more{display:block;font-size:41px;color:#2bb381;height:50px;margin-top:62px}
:host([group]) .more{margin-top:64px}
:host(:not([group])) .sub{display:none}
.act{position:relative;width:234px;margin-top:-54px;height:317px;display:flex;align-items:center;justify-content:center;color:#2bb381}
:host([group]) .act{height:380px;margin-top:-55px}
.mark{display:none;position:absolute;left:15px;top:125px;width:199px;height:124px;box-sizing:border-box;border:14px solid #4472c4;background:#f8f5fd}
:host([marked]) .mark{display:block}
ui-icon{position:relative}
</style><div class="l"><span class="title"><slot></slot></span><span class="sub"><slot name="sub"></slot></span><span class="more"><fit-text w="126">mehr...</fit-text></span></div>
<div class="act"><div class="mark"></div><ui-icon name="plus" w="48" h="47"></ui-icon></div>`);

define('portal-dialog', `<style>
:host{display:flex;flex-direction:column;width:1901px;height:1895px;border-radius:12px;overflow:hidden;background:#fff}
header{position:relative;z-index:1;display:flex;align-items:center;flex:none;height:187px;background:#2bb381;color:#fff;font-size:60px;padding:0 60px 0 57px;box-sizing:border-box;box-shadow:0 4px 14px rgba(0,0,0,.35)}
.lay{margin:0 33px 0 91px}
.cap{padding-top:2px;font-weight:500}
.x{margin-left:auto}
.body{display:flex;flex-direction:column;padding:62px 0 0 69px;box-sizing:border-box;height:1708px;overflow:hidden}
h1{flex:none;margin:0;font-size:62px;font-weight:700;line-height:80px;height:80px;color:#3f3f3f}
.search{flex:none;box-sizing:border-box;margin-top:81px;width:1762px;height:91px;line-height:80px;font-size:48px;color:#6f6f6f;border-bottom:4px solid #999}
.res{flex:none;margin:64px 0 48px;height:60px;line-height:60px;font-size:41px;color:#333}
.thumb{position:absolute;z-index:2;right:0;top:187px;width:17px;height:49px;border-radius:0 0 9px 9px;background:#cacaca}
</style>
<header><ui-icon name="back" w="36" h="62"></ui-icon><ui-icon class="lay" name="layers" w="73" h="73"></ui-icon><fit-text class="cap" w="497">Externes Geoportal</fit-text><ui-icon class="x" name="close" w="44" h="43"></ui-icon></header>
<div class="body">
<h1><fit-text w="1202">Importiere Layer von "WMS Breitbandatlas"</fit-text></h1>
<div class="search"><fit-text w="332">Search by name</fit-text></div>
<div class="res"><fit-text w="138">Results</fit-text></div>
<result-card group marked><fit-text w="497">Breitband Gewerbegebiete</fit-text><fit-text slot="sub" w="335">Neuer Gruppen-Layer</fit-text></result-card>
<result-card><fit-text w="527">Raster - Glasfaseranschluss</fit-text></result-card>
<result-card group><fit-text w="378">Breitband Öffentlich</fit-text><fit-text slot="sub" w="335">Neuer Gruppen-Layer</fit-text></result-card>
<result-card><fit-text w="523">Schulen - Alle Technologien</fit-text></result-card>
</div><div class="thumb"></div>`);

define('goat-app', `<style>
:host{display:flex;position:relative;box-sizing:border-box;width:3753px;height:2114px;border:4px solid #000;border-bottom-width:5px;background:#000;overflow:hidden}
goat-sidebar,city-map,tool-rail{flex:none}
map-attribution{position:absolute;left:2864px;top:2020px}
portal-dialog{position:absolute;left:923px;top:105px}
</style><goat-sidebar></goat-sidebar><city-map></city-map><tool-rail></tool-rail><map-attribution></map-attribution><portal-dialog></portal-dialog>`);
</script>
</body>
</html>
